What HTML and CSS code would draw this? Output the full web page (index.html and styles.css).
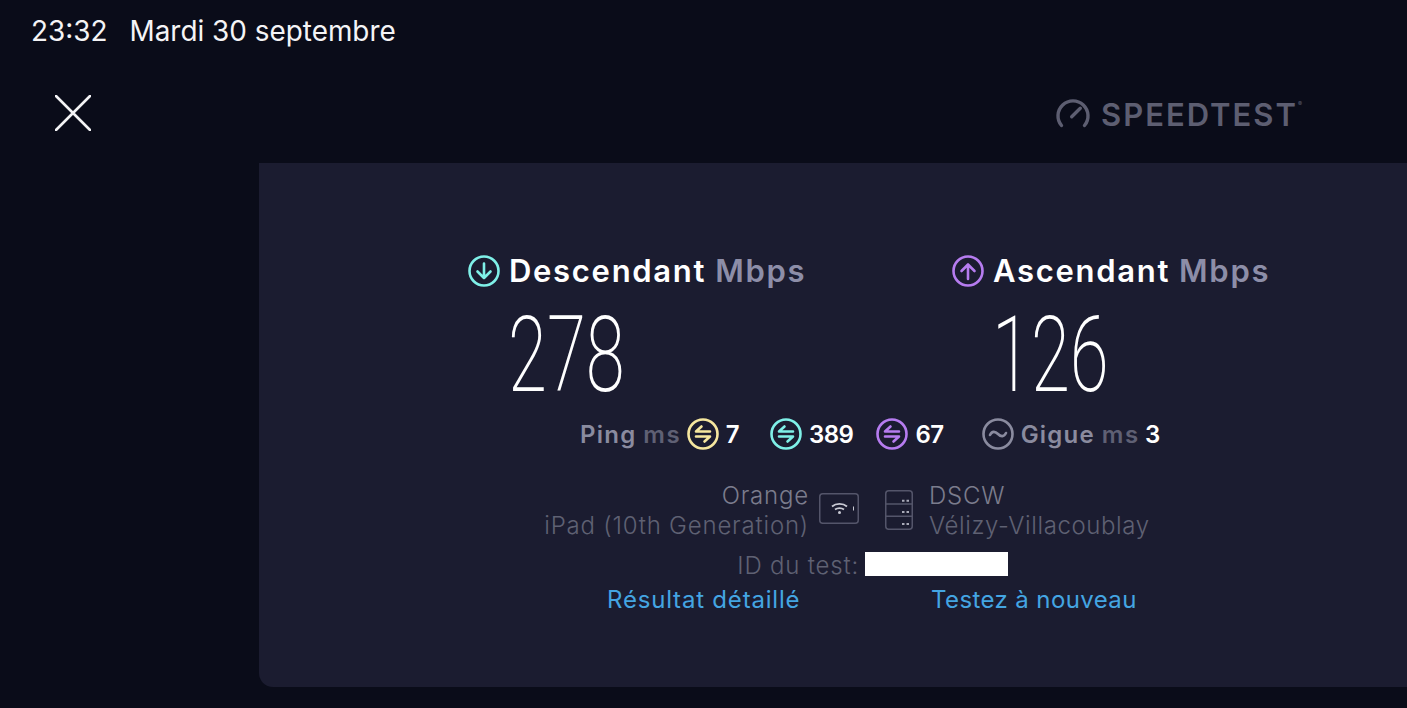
FILE: index.html
```html
<!DOCTYPE html>
<html lang="fr">
<head>
  <meta charset="UTF-8" />
  <meta name="viewport" content="width=device-width, initial-scale=1.0">
  <title>Speedtest</title>
  <link rel="stylesheet" href="styles.css">
</head>
<body>

  <div class="status-bar">
    <span class="clock">23:32</span>
    <span>Mardi 30 septembre</span>
  </div>

  <div class="top-row">
    <svg class="close-icon" width="36" height="36" viewBox="0 0 36 36">
      <path d="M1 1 L35 35 M35 1 L1 35" />
    </svg>
    <div class="logo">
      <svg class="logo-gauge" width="36" height="30" viewBox="0 0 36 30">
        <path class="gauge-arc" d="M6.5 27.5 A15 15 0 1 1 29.5 27.5" />
        <path class="gauge-arc" d="M16.7 18.7 L25.3 10.3" />
      </svg>
      <span class="logo-text">SPEEDTEST</span><span class="logo-mark">®</span>
    </div>
  </div>

  <div class="panel">
    <div class="speeds">
      <div class="speed">
        <div class="speed-title">
          <svg class="title-icon" width="32" height="32" viewBox="0 0 32 32">
            <circle class="ring-cyan" cx="16" cy="16" r="14.5" />
            <path class="ring-cyan" d="M16 8.5 V23 M9.5 16.5 L16 23 L22.5 16.5" />
          </svg>
          <span class="title-name">Descendant</span>
          <span class="title-unit">Mbps</span>
        </div>
        <div class="speed-value"><span>278</span></div>
      </div>
      <div class="speed">
        <div class="speed-title">
          <svg class="title-icon" width="32" height="32" viewBox="0 0 32 32">
            <circle class="ring-purple" cx="16" cy="16" r="14.5" />
            <path class="ring-purple" d="M16 24 V9.5 M9.5 16 L16 9.5 L22.5 16" />
          </svg>
          <span class="title-name">Ascendant</span>
          <span class="title-unit">Mbps</span>
        </div>
        <div class="speed-value"><span>126</span></div>
      </div>
    </div>

    <div class="latency">
      <span class="lat-label">Ping</span>
      <span class="lat-unit">ms</span>
      <svg width="32" height="32" viewBox="0 0 32 32">
        <circle class="ring-yellow" cx="16" cy="16" r="14.5" />
        <path class="ring-yellow" d="M23 13.5 H9 L14.5 8.5 M9 18.5 H23 L17.5 23.5" />
      </svg>
      <span class="lat-value">7</span>
      <svg class="lat-gap-a" width="32" height="32" viewBox="0 0 32 32">
        <circle class="ring-cyan" cx="16" cy="16" r="14.5" />
        <path class="ring-cyan" d="M23 13.5 H9 L14.5 8.5 M9 18.5 H23 L17.5 23.5" />
      </svg>
      <span class="lat-value">389</span>
      <svg class="lat-gap-b" width="32" height="32" viewBox="0 0 32 32">
        <circle class="ring-purple" cx="16" cy="16" r="14.5" />
        <path class="ring-purple" d="M23 13.5 H9 L14.5 8.5 M9 18.5 H23 L17.5 23.5" />
      </svg>
      <span class="lat-value">67</span>
      <svg class="lat-gap-c" width="32" height="32" viewBox="0 0 32 32">
        <circle class="ring-grey" cx="16" cy="16" r="14.5" />
        <path class="ring-grey" d="M8 17 C10 13 13 13 16 16 C19 19 22 19 24 15" />
      </svg>
      <span class="lat-label">Gigue</span>
      <span class="lat-unit">ms</span>
      <span class="lat-value">3</span>
    </div>

    <div class="details">
      <div class="info info-left">
        <div class="info-text">
          <div class="info-main">Orange</div>
          <div>iPad (10th Generation)</div>
        </div>
        <svg class="device-icon" width="40" height="31" viewBox="0 0 40 31">
          <rect class="line-icon" x="0.75" y="0.75" width="38.5" height="29.5" rx="3" />
          <path class="wifi" d="M13 13.5 C17 10 24 10 28 13.5 M16 16.5 C18.5 14.7 22.5 14.7 25 16.5" />
          <circle class="dot" cx="20.5" cy="19.5" r="1.5" />
          <rect class="dot" x="34" y="13.5" width="1" height="4" />
        </svg>
      </div>
      <div class="info info-right">
        <svg class="server-icon" width="28" height="40" viewBox="0 0 28 40">
          <rect class="line-icon" x="0.75" y="0.75" width="26.5" height="38.5" rx="3" />
          <path class="line-icon" d="M1 14 H27 M1 26.3 H27" />
          <path class="server-dots" d="M17 10.7 h2.5 M21.5 10.7 h2.5 M17 22 h2.5 M21.5 22 h2.5 M17 34 h2.5 M21.5 34 h2.5" />
        </svg>
        <div class="info-text">
          <div class="info-main">DSCW</div>
          <div class="server-city">Vélizy-Villacoublay</div>
        </div>
      </div>
      <div class="test-id">ID du test:</div>
      <div class="test-id-box"></div>
      <a class="action action-left" href="#">Résultat détaillé</a>
      <a class="action action-right" href="#">Testez à nouveau</a>
    </div>
  </div>

</body>
</html>
```

FILE: styles.css
```css
* {
  box-sizing: border-box;
}
body {
  margin: 0;
  height: 708px;
  overflow: hidden;
  background: #0a0c19;
  font-family: Inter, "Liberation Sans", sans-serif;
  color: white;
}

.status-bar {
  height: 62px;
  padding-left: 31px;
  display: flex;
  align-items: center;
  gap: 22px;
  font-size: 27.9px;
  color: #f4f4f6;
}

.top-row {
  height: 101px;
  padding: 0 105px 0 54px;
  display: flex;
  justify-content: space-between;
  align-items: flex-start;
}
.close-icon {
  margin: 33px 0 0 1px;
}
.close-icon path {
  fill: none;
  stroke: #f4f4f6;
  stroke-width: 2.6;
  stroke-linecap: round;
}

.logo {
  margin-top: 36px;
  display: flex;
  align-items: flex-start;
  color: #5d5e71;
}
.logo-gauge {
  margin-right: 10px;
}
.gauge-arc {
  fill: none;
  stroke: #5d5e71;
  stroke-width: 3.4;
  stroke-linecap: round;
}
.logo-text {
  font-size: 31px;
  font-weight: 600;
  letter-spacing: 2px;
  line-height: 34px;
}
.logo-mark {
  font-size: 6px;
  line-height: 12px;
}

.panel {
  margin-left: 259px;
  height: 524px;
  padding: 88px 0 0 209px;
  background: #1b1c30;
  border-bottom-left-radius: 14px;
}

.speeds {
  display: flex;
}
.speed {
  flex: none;
  width: 484px;
}
.speed-title {
  height: 40px;
  display: flex;
  align-items: center;
  font-size: 31px;
  font-weight: 600;
  letter-spacing: 1.7px;
}
.title-icon {
  margin-right: 9px;
}
.title-name, .title-unit {
  margin-top: -2px;
}
.title-unit {
  margin-left: 9px;
  color: #8d8ea8;
}
.speed-value {
  margin-top: 20px;
  padding-left: 40px;
  height: 85px;
  font-family: Roboto, sans-serif;
  font-size: 106px;
  font-weight: 200;
  line-height: 88px;
}
.speed-value span {
  display: inline-block;
  transform: scaleX(0.667);
  transform-origin: left center;
}

.ring-cyan, .ring-purple, .ring-yellow, .ring-grey {
  fill: none;
  stroke-width: 2.6;
  stroke-linecap: round;
  stroke-linejoin: round;
}
.ring-cyan { stroke: #7ff0e8; }
.ring-purple { stroke: #b67cf0; }
.ring-yellow { stroke: #f6e79f; }
.ring-grey { stroke: #8a8b9f; }

.latency {
  width: 804px;
  height: 36px;
  margin-top: 20px;
  display: flex;
  justify-content: center;
  align-items: center;
  gap: 7px;
  font-size: 24px;
  font-weight: 600;
}
.lat-label {
  letter-spacing: 1.2px;
  color: #8a8b9f;
}
.lat-unit {
  margin-right: -1.5px;
  letter-spacing: 1.5px;
  color: #5f6074;
}
.lat-value {
  letter-spacing: -0.5px;
}
.lat-gap-a { margin-left: 24px; }
.lat-gap-b { margin-left: 16px; }
.lat-gap-c { margin-left: 31px; }

.details {
  width: 808px;
  margin-top: 29px;
  display: grid;
  grid-template-columns: 391px 1fr;
  column-gap: 26px;
  font-size: 24px;
  font-weight: 300;
  letter-spacing: 0.8px;
  color: #5f6173;
}
.info {
  height: 60px;
  display: flex;
  align-items: center;
  line-height: 30px;
}
.info-left {
  justify-content: flex-end;
  text-align: right;
}
.info-left .info-text {
  margin-right: -1px;
}
.info-main {
  color: #7b7c8d;
}
.server-city {
  letter-spacing: 0.6px;
}
.device-icon {
  margin: -6px 0 0 11px;
}
.server-icon {
  margin: -2px 16px 0 0;
}
.line-icon {
  fill: none;
  stroke: #54556a;
  stroke-width: 1.5;
}
.wifi {
  fill: none;
  stroke: #c9cad4;
  stroke-width: 1.8;
}
.dot {
  fill: #c9cad4;
}
.server-dots {
  fill: none;
  stroke: #a9aab8;
  stroke-width: 2;
}

.test-id {
  margin-top: 13px;
  height: 24px;
  line-height: 24px;
  text-align: right;
}
.test-id-box {
  margin: 11px 0 0 -20px;
  width: 143px;
  height: 24px;
  background: white;
}

.action {
  margin-top: 7px;
  height: 30px;
  line-height: 30px;
  font-weight: 400;
  color: #44a5e2;
  text-decoration: none;
}
.action-left {
  padding-left: 139px;
}
.action-right {
  padding-left: 46px;
  letter-spacing: 0.4px;
}
```
